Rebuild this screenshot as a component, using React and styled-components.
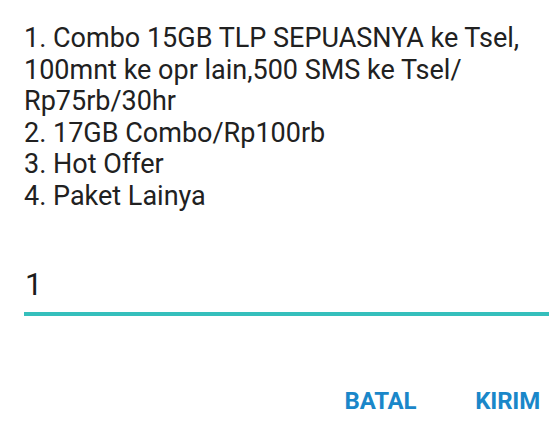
import React from "react";
import styled, { createGlobalStyle } from "styled-components";

const Global = createGlobalStyle`
  html, body { margin: 0; padding: 0; background: #ffffff; }
  body { font-family: Roboto, "Noto Sans", sans-serif; }
`;

const Dialog = styled.div`
  width: 549px;
  height: 441px;
  box-sizing: border-box;
  background: #ffffff;
  display: flex;
  flex-direction: column;
  padding: 23px 0 0 24px;
  overflow: hidden;
`;

const Message = styled.div`
  font-size: 27px;
  line-height: 31.5px;
  color: #212121;
  white-space: pre-line;
`;

const Field = styled.div`
  margin-top: 55px;
  border-bottom: 4px solid #35bfbc;
  padding-bottom: 9px;
`;

const FieldValue = styled.div`
  font-size: 31px;
  line-height: 36px;
  color: #1c1c1c;
  padding-left: 1px;
`;

const Actions = styled.div`
  display: flex;
  justify-content: flex-end;
  gap: 59px;
  margin-top: 71px;
  padding-right: 9px;
`;

const ActionButton = styled.button`
  border: none;
  background: none;
  padding: 0;
  font-family: Roboto, "Noto Sans", sans-serif;
  font-weight: 700;
  font-size: 24px;
  line-height: 28px;
  color: #1a87c9;
  letter-spacing: -0.2px;
  cursor: pointer;
`;

const message = `1. Combo 15GB TLP SEPUASNYA ke Tsel,
100mnt ke opr lain,500 SMS ke Tsel/
Rp75rb/30hr
2. 17GB Combo/Rp100rb
3. Hot Offer
4. Paket Lainya`;

export default function App() {
  return (
    <>
      <Global />
      <Dialog>
        <Message>{message}</Message>
        <Field>
          <FieldValue>1</FieldValue>
        </Field>
        <Actions>
          <ActionButton>BATAL</ActionButton>
          <ActionButton>KIRIM</ActionButton>
        </Actions>
      </Dialog>
    </>
  );
}
